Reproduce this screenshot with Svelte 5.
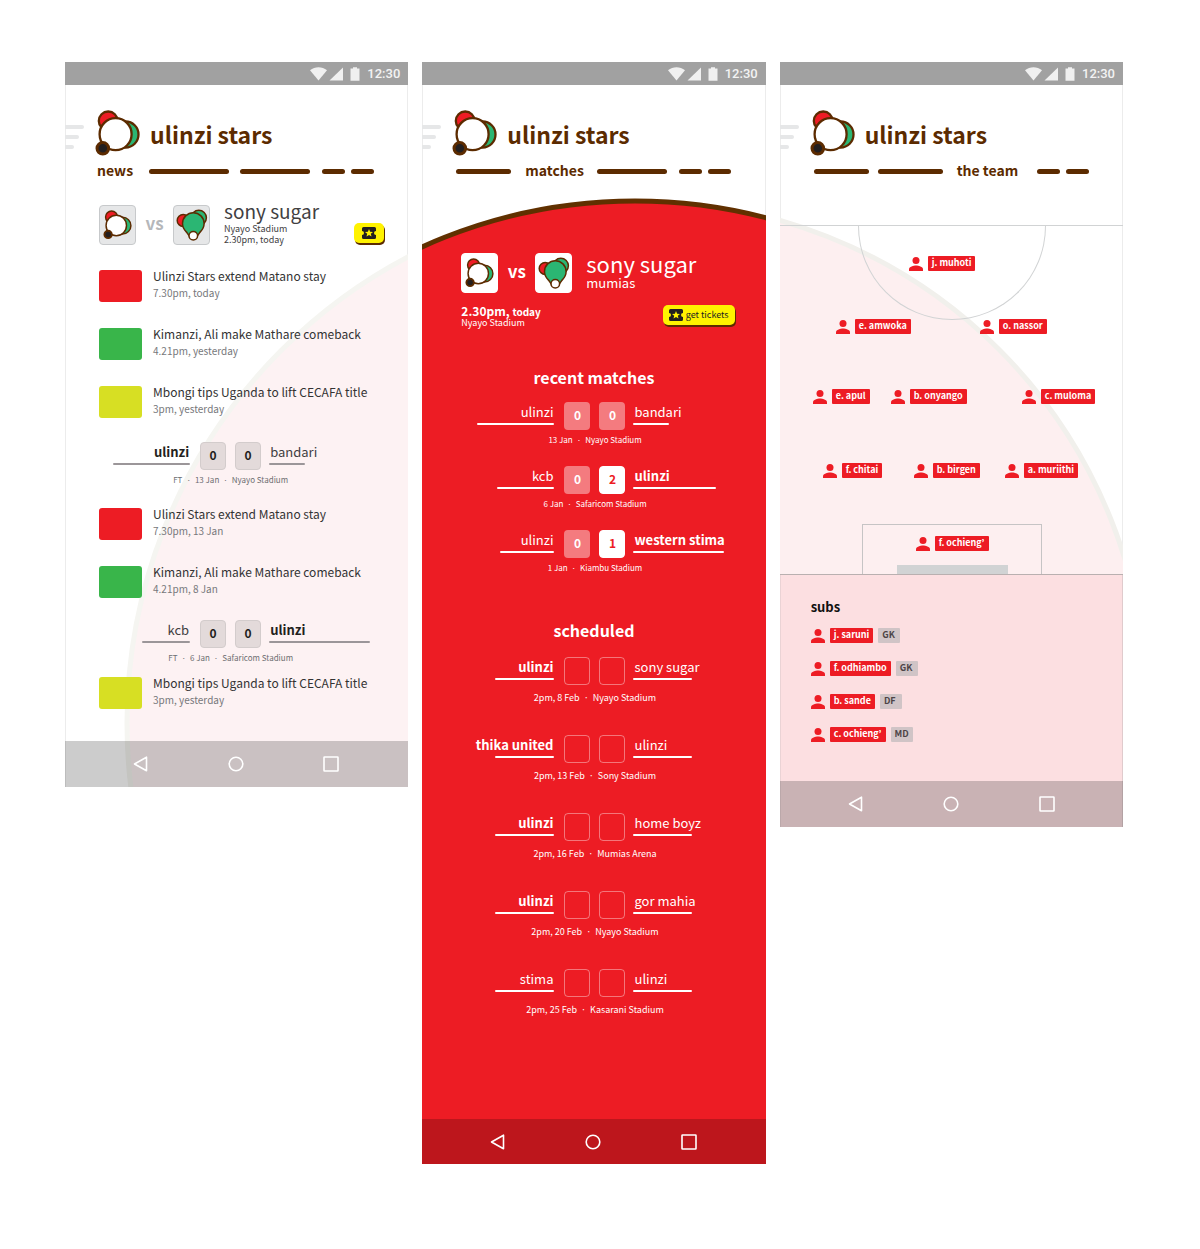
<script>
  const dashes = {
    news: ['news', 80, 70, 23, 23],
    matches: [55, 'matches', 70, 23, 23],
    team: [55, 65, 'the team', 23, 23]
  };
  const tabNames = ['news', 'matches', 'the team', 'table', 'more'];

  const feed = [
    { kind: 'story', colour: 'red', title: 'Ulinzi Stars extend Matano stay', when: '7.30pm, today', space: 'first' },
    { kind: 'story', colour: 'green', title: 'Kimanzi, Ali make Mathare comeback', when: '4.21pm, yesterday', space: 'loose' },
    { kind: 'story', colour: 'lime', title: 'Mbongi tips Uganda to lift CECAFA title', when: '3pm, yesterday', space: 'loose' },
    { kind: 'match', home: 'ulinzi', away: 'bandari', hs: '0', as: '0', hw: 77, aw: 36, bold: 'home', meta: ['FT', '13 Jan', 'Nyayo Stadium'], space: 'mid' },
    { kind: 'story', colour: 'red', title: 'Ulinzi Stars extend Matano stay', when: '7.30pm, 13 Jan', space: 'near' },
    { kind: 'story', colour: 'green', title: 'Kimanzi, Ali make Mathare comeback', when: '4.21pm, 8 Jan', space: 'loose' },
    { kind: 'match', home: 'kcb', away: 'ulinzi', hs: '0', as: '0', hw: 48, aw: 101, bold: 'away', meta: ['FT', '6 Jan', 'Safaricom Stadium'], space: 'near' },
    { kind: 'story', colour: 'lime', title: 'Mbongi tips Uganda to lift CECAFA title', when: '3pm, yesterday', space: 'tight' }
  ];

  const recent = [
    { home: 'ulinzi', away: 'bandari', hs: '0', as: '0', hw: 77, aw: 36, meta: ['13 Jan', 'Nyayo Stadium'] },
    { home: 'kcb', away: 'ulinzi', hs: '0', as: '2', hw: 57, aw: 83, bold: 'away', won: true, meta: ['6 Jan', 'Safaricom Stadium'] },
    { home: 'ulinzi', away: 'western stima', hs: '0', as: '1', hw: 54, aw: 91, bold: 'away', won: true, meta: ['1 Jan', 'Kiambu Stadium'] }
  ];

  const scheduled = [
    { home: 'ulinzi', away: 'sony sugar', bold: 'home', meta: ['2pm, 8 Feb', 'Nyayo Stadium'] },
    { home: 'thika united', away: 'ulinzi', bold: 'home', meta: ['2pm, 13 Feb', 'Sony Stadium'] },
    { home: 'ulinzi', away: 'home boyz', bold: 'home', meta: ['2pm, 16 Feb', 'Mumias Arena'] },
    { home: 'ulinzi', away: 'gor mahia', bold: 'home', meta: ['2pm, 20 Feb', 'Nyayo Stadium'] },
    { home: 'stima', away: 'ulinzi', meta: ['2pm, 25 Feb', 'Kasarani Stadium'] }
  ].map((m) => ({ ...m, hs: '', as: '', hw: 59, aw: 59, open: true }));

  const lineup = [
    { name: 'j. muhoti', x: 129, y: 30 },
    { name: 'e. amwoka', x: 56, y: 93 },
    { name: 'o. nassor', x: 200, y: 93 },
    { name: 'e. apul', x: 33, y: 163 },
    { name: 'b. onyango', x: 111, y: 163 },
    { name: 'c. muloma', x: 242, y: 163 },
    { name: 'f. chitai', x: 43, y: 237 },
    { name: 'b. birgen', x: 134, y: 237 },
    { name: 'a. muriithi', x: 225, y: 237 },
    { name: 'f. ochieng’', x: 136, y: 310 }
  ];

  const subs = [
    { name: 'j. saruni', role: 'GK' },
    { name: 'f. odhiambo', role: 'GK' },
    { name: 'b. sande', role: 'DF' },
    { name: 'c. ochieng’', role: 'MD' }
  ];
</script>

{#snippet crest()}
  <circle cx="13.2" cy="10.9" r="9.4" fill="#ed1c24" />
  <circle cx="30.5" cy="24.5" r="13" fill="#2bb673" />
  <circle cx="20.6" cy="24.2" r="16" fill="#fff" />
  <circle class="ball" cx="7.8" cy="38.3" r="5.8" fill="#231f20" />
{/snippet}

{#snippet ulinziBadge()}
  <span class="badge">
    <svg viewBox="0 0 45 47" width="29" height="30" class="crest" role="img" aria-label="Ulinzi Stars">{@render crest()}</svg>
  </span>
{/snippet}

{#snippet sonyBadge()}
  <span class="badge">
    <svg viewBox="0 0 32 32" width="32" height="32" class="sony" role="img" aria-label="Sony Sugar">
      <circle cx="7.2" cy="11.4" r="6" fill="#ed1c24" />
      <circle cx="22.8" cy="8.8" r="7.6" fill="#2bb673" />
      <path d="M17.3 3.7a10.8 10.8 0 0 1 10.8 10.8c0 4-1.800 6.400-4 8.600l-2.800 4h-8l-2.800-4c-2.200-2.200-4-4.600-4-8.600a10.800 10.800 0 0 1 10.800-10.800z" fill="#2bb673" />
      <circle cx="17.300" cy="26.800" r="4.300" fill="#fff" />
    </svg>
  </span>
{/snippet}

{#snippet ticket()}
  <svg viewBox="0 0 14 12" width="14" height="12" class="ticket" aria-hidden="true">
    <path d="M0 1.500A1.500 1.500 0 0 1 1.500 0h11A1.500 1.500 0 0 1 14 1.500V4a2 2 0 0 0 0 4v2.500a1.500 1.500 0 0 1-1.500 1.500h-11A1.500 1.500 0 0 1 0 10.500V8a2 2 0 0 0 0-4z" fill="#231f20" />
    <path d="M7 2l1.100 2.700 2.900.2-2.200 1.900.7 2.800L7 8.100 4.500 9.600l.7-2.800L3 4.900l2.900-.2z" fill="#fff200" />
  </svg>
{/snippet}

{#snippet person()}
  <svg viewBox="0 0 14 14" width="14" height="14" class="person" aria-hidden="true">
    <circle cx="7" cy="3.600" r="3.500" />
    <path d="M0 14v-1.800C0 9.800 4.600 8.600 7 8.600s7 1.200 7 3.600V14z" />
  </svg>
{/snippet}

{#snippet top(active)}
  <div class="status">
    <svg viewBox="0 0 52 14" width="52" height="14" aria-hidden="true">
      <path d="M0 3.200C5-.8 12-.8 17 3.200L8.500 13.500z" />
      <path d="M19.500 13.500 33 .5v13z" />
      <path d="M40.500 1.500h2.500V.3h4v1.200h2.500v12.300h-9z" />
    </svg>
    <time>12:30</time>
  </div>
  <header>
    <button class="menu" aria-label="Menu"><i></i><i></i><i></i></button>
    <svg viewBox="0 0 45 47" width="45" height="47" class="crest" aria-hidden="true">{@render crest()}</svg>
    <h1>ulinzi stars</h1>
  </header>
  <nav class="tabs {active}">
    {#each dashes[active] as tab, i}
      {#if typeof tab === 'string'}
        <a href="#{active}" aria-current="page">{tab}</a>
      {:else}
        <a href="#tab{i}" class="dash" aria-label={tabNames[i]} style:width="{tab}px"></a>
      {/if}
    {/each}
  </nav>
{/snippet}

{#snippet match(m)}
  <div class="match" class:open={m.open}>
    <div class="side home" class:strong={m.bold === 'home'}>
      <span>{m.home}</span>
      <i style:width="{m.hw}px"></i>
    </div>
    <b class="score">{m.hs}</b>
    <b class="score" class:won={m.won}>{m.as}</b>
    <div class="side away" class:strong={m.bold === 'away'}>
      <span>{m.away}</span>
      <i style:width="{m.aw}px"></i>
    </div>
    <p class="meta">
      {#each m.meta as part, i}{#if i > 0}<span>·</span>{/if}{part}{/each}
    </p>
  </div>
{/snippet}

{#snippet system()}
  <div class="system">
    <button aria-label="Back"><svg viewBox="0 0 18 18" width="18" height="18"><path d="M14.500 2.200v13.600L2.500 9z" /></svg></button>
    <button aria-label="Home"><svg viewBox="0 0 18 18" width="18" height="18"><circle cx="9" cy="9" r="6.800" /></svg></button>
    <button aria-label="Overview"><svg viewBox="0 0 18 18" width="18" height="18"><rect x="2" y="2" width="14" height="14" rx=".5" /></svg></button>
  </div>
{/snippet}

<main>
  <section class="phone news">
    <svg class="backdrop" aria-hidden="true"><circle cx="589" cy="661" r="527" fill="#fdf2f3" stroke="#f5f5f1" stroke-width="5" /></svg>
    {@render top('news')}
    <div class="fixture">
      {@render ulinziBadge()}
      <span class="vs">vs</span>
      {@render sonyBadge()}
      <div class="about">
        <h2>sony sugar</h2>
        <p>Nyayo Stadium</p>
        <p>2.30pm, today</p>
      </div>
      <button class="buy" aria-label="Get tickets">{@render ticket()}</button>
    </div>
    <ul class="feed">
      {#each feed as item}
        <li class={item.space}>
          {#if item.kind === 'story'}
            <article>
              <span class="thumb {item.colour}"></span>
              <div>
                <h3>{item.title}</h3>
                <p>{item.when}</p>
              </div>
            </article>
          {:else}
            {@render match(item)}
          {/if}
        </li>
      {/each}
    </ul>
    {@render system()}
  </section>

  <section class="phone matches">
    <svg class="backdrop" aria-hidden="true"><circle cx="213" cy="656" r="517" fill="#ed1c24" stroke="#603000" stroke-width="5" /></svg>
    {@render top('matches')}
    <div class="fixture">
      {@render ulinziBadge()}
      <span class="vs">vs</span>
      {@render sonyBadge()}
      <div class="about">
        <h2>sony sugar</h2>
        <p>mumias</p>
      </div>
    </div>
    <div class="kickoff">
      <div>
        <p class="when">2.30pm, <small>today</small></p>
        <p class="where">Nyayo Stadium</p>
      </div>
      <button class="buy">{@render ticket()}get tickets</button>
    </div>
    <h2 class="heading">recent matches</h2>
    <div class="results">
      {#each recent as m}{@render match(m)}{/each}
    </div>
    <h2 class="heading">scheduled</h2>
    <div class="results upcoming">
      {#each scheduled as m}{@render match(m)}{/each}
    </div>
    {@render system()}
  </section>

  <section class="phone team">
    <svg class="backdrop" aria-hidden="true"><circle cx="-139" cy="645" r="506" fill="#fdeff0" stroke="#f1f0ec" stroke-width="5" /></svg>
    {@render top('team')}
    <div class="pitch">
      <div class="centre"></div>
      <div class="area"><i></i></div>
      {#each lineup as p}
        <div class="player spot" style:left="{p.x}px" style:top="{p.y}px">
          {@render person()}
          <b>{p.name}</b>
        </div>
      {/each}
    </div>
    <div class="bench">
      <h2>subs</h2>
      <ul>
        {#each subs as p}
          <li class="player">{@render person()}<b>{p.name}</b><em>{p.role}</em></li>
        {/each}
      </ul>
      {@render system()}
    </div>
  </section>
</main>

<style>
  :global(body) {
    margin: 0;
    background: #fff;
  }
  main {
    display: grid;
    grid-template-columns: repeat(3, 1fr);
    align-items: start;
    gap: 14px;
    padding: 62px 77px 85px 65px;
    font-family: 'Noto Sans CJK JP', 'Noto Sans', sans-serif;
    color: #414042;
  }
  h1, h2, h3, p, ul {
    margin: 0;
    padding: 0;
    font-weight: 400;
  }
  ul {
    list-style: none;
  }
  button {
    border: 0;
    padding: 0;
    background: none;
    font: inherit;
    cursor: pointer;
  }
  svg {
    display: block;
    flex: none;
  }
  .phone {
    position: relative;
    isolation: isolate;
    overflow: hidden;
    box-shadow: inset 1px 0 #ececec, inset -1px 0 #ececec;
  }
  .backdrop {
    position: absolute;
    inset: 0;
    z-index: -1;
    width: 100%;
    height: 100%;
  }
  .status {
    display: flex;
    align-items: center;
    justify-content: flex-end;
    gap: 5px;
    height: 23px;
    padding-right: 8px;
    background: #a1a1a1;
    color: #f3f3f3;
    font: 500 13px/23px Roboto, sans-serif;
  }
  .status svg {
    fill: #f0f0f0;
  }
  header {
    display: flex;
    height: 47px;
    padding-top: 25px;
  }
  .menu {
    display: flex;
    flex-direction: column;
    gap: 6px;
    width: 30px;
    padding-top: 15px;
  }
  .menu i {
    width: 19px;
    height: 4px;
    border-radius: 0 2px 2px 0;
    background: #e6e7e8;
  }
  .menu i:nth-child(2) {
    width: 14px;
  }
  .menu i:nth-child(3) {
    width: 9px;
  }
  .crest {
    stroke: #5c2b00;
    stroke-width: 2.3;
  }
  .ball {
    stroke-width: 3;
  }
  h1 {
    margin-left: 10px;
    color: #5c2b00;
    font-size: 23px;
    font-weight: 700;
    line-height: 48px;
  }
  .tabs {
    display: grid;
    align-items: center;
    height: 24px;
    margin-top: 2px;
    padding-left: 34px;
    grid-template-columns: 69px 72px 82px 29px 23px;
  }
  .tabs.news {
    padding-left: 32px;
    grid-template-columns: 52px 91px 82px 29px 23px;
  }
  .tabs.team {
    grid-template-columns: 64px 79px 80px 29px 23px;
  }
  .tabs a {
    padding-bottom: 2px;
    color: #5c2b00;
    font-size: 14px;
    font-weight: 700;
    line-height: 22px;
    text-decoration: none;
    white-space: nowrap;
  }
  .tabs .dash {
    height: 5px;
    padding: 0;
    border-radius: 3px;
    background: #5c2b00;
  }
  .fixture {
    display: flex;
    align-items: center;
    padding: 21px 24px 0 34px;
  }
  .badge {
    display: flex;
    align-items: center;
    justify-content: center;
    box-sizing: border-box;
    width: 37px;
    height: 40px;
    border: 1px solid #c7c9cb;
    border-radius: 4px;
    background: #e6e7e8;
  }
  .sony {
    stroke: #5c2b00;
    stroke-width: 1.5;
  }
  .vs {
    width: 37px;
    padding-bottom: 4px;
    color: #b5b7ba;
    font-size: 17px;
    font-weight: 700;
    line-height: 20px;
    text-align: center;
  }
  .about {
    flex: 1;
    margin-left: 14px;
    padding-bottom: 1px;
    font-size: 9px;
    line-height: 11px;
  }
  .about h2 {
    margin-bottom: 5px;
    font-size: 19px;
    line-height: 14px;
  }
  .buy {
    display: flex;
    align-items: center;
    justify-content: center;
    gap: 3px;
    width: 30px;
    height: 20px;
    border-radius: 5px;
    background: #fff200;
    box-shadow: 1px 2px #5c2b00;
    color: #231f20;
    font-size: 9px;
    line-height: 18px;
  }
  .news .buy {
    align-self: flex-end;
    margin-bottom: 3px;
  }
  .feed {
    padding: 24px 0 32px;
  }
  .loose {
    margin-top: 26px;
  }
  .mid {
    margin-top: 24px;
  }
  .near {
    margin-top: 22px;
  }
  .tight {
    margin-top: 13px;
  }
  article {
    display: flex;
    gap: 11px;
    padding-left: 34px;
  }
  .thumb {
    width: 43px;
    height: 32px;
    border-radius: 3px;
  }
  .red {
    background: #ed1c24;
  }
  .green {
    background: #39b54a;
  }
  .lime {
    background: #d7df23;
  }
  h3 {
    color: #333;
    font-size: 12px;
    line-height: 12px;
  }
  article p {
    margin-top: 3px;
    color: #77787b;
    font-size: 10px;
    line-height: 16px;
  }
  .match {
    display: grid;
    grid-template-columns: 1fr 26px 26px 1fr;
    column-gap: 9px;
    padding-left: 2px;
  }
  .news .match {
    padding: 0 12px 0 0;
  }
  .side {
    display: flex;
    flex-direction: column;
    gap: 2px;
    white-space: nowrap;
    font-size: 13px;
    line-height: 19px;
  }
  .home {
    align-items: flex-end;
    margin-right: 1px;
  }
  .away {
    margin-left: -1px;
  }
  .home span {
    margin-right: 1px;
  }
  .away span {
    margin-left: 1px;
  }
  .strong {
    font-weight: 700;
  }
  .news .strong {
    color: #231f20;
  }
  .side i {
    height: 2px;
    border-radius: 1px;
    background: #9b9699;
  }
  .score {
    box-sizing: border-box;
    height: 28px;
    border: 1px solid #d3cccc;
    border-radius: 4px;
    background: #e3dada;
    color: #231f20;
    font-size: 12px;
    line-height: 24px;
    text-align: center;
  }
  .meta {
    grid-column: 1 / -1;
    margin-top: 4px;
    color: #6d6e71;
    font-size: 8px;
    line-height: 12px;
    text-align: center;
  }
  .meta span {
    margin: 0 4px;
  }
  .system {
    display: flex;
    align-items: center;
    justify-content: space-between;
    height: 46px;
    padding: 0 68px 0 67px;
    background: rgba(0, 0, 0, .2);
  }
  .team .system {
    padding: 0 67px;
  }
  .system svg {
    fill: none;
    stroke: #fff;
    stroke-width: 1.6;
    stroke-linejoin: round;
  }
  .matches {
    color: #fff;
  }
  .matches .fixture {
    padding: 70px 22px 0 39px;
  }
  .matches .badge {
    border-color: #fff;
    background: #fff;
  }
  .matches .vs {
    color: #fff;
  }
  .matches .about {
    padding-bottom: 0;
    font-size: 13px;
    line-height: 20px;
  }
  .matches .about h2 {
    margin-bottom: 0;
    font-size: 22px;
    line-height: 20px;
  }
  .kickoff {
    display: flex;
    justify-content: space-between;
    padding: 12px 31px 0 39px;
  }
  .when {
    font-size: 12px;
    font-weight: 700;
    line-height: 12px;
  }
  .when small {
    font-size: 10px;
  }
  .where {
    font-size: 9px;
    line-height: 10px;
  }
  .kickoff .buy {
    width: 72px;
  }
  .heading {
    padding-top: 37px;
    font-size: 16px;
    font-weight: 700;
    line-height: 24px;
    text-align: center;
  }
  .results {
    display: flex;
    flex-direction: column;
    gap: 20px;
    padding: 13px 0 7px;
  }
  .matches .score {
    border-color: transparent;
    background: rgba(255, 255, 255, .42);
    color: #fff;
  }
  .matches .score.won {
    border-color: #fff;
    background: #fff;
    color: #ed1c24;
  }
  .matches .open .score {
    border-color: rgba(255, 255, 255, .4);
    background: none;
  }
  .matches .side i {
    background: #fff;
  }
  .matches .meta {
    color: #fff;
  }
  .upcoming {
    gap: 31px;
    padding: 15px 0 103px;
  }
  .open .meta {
    margin-top: 7px;
    font-size: 9px;
  }
  .matches .system {
    height: 45px;
  }
  .pitch {
    position: relative;
    box-sizing: border-box;
    height: 349px;
    margin-top: 42px;
    padding-left: 2px;
    border-top: 1px solid #d1d3d4;
    overflow: hidden;
  }
  .centre {
    box-sizing: border-box;
    width: 188px;
    height: 94px;
    margin: 0 auto;
    border: 1px solid #d1d3d4;
    border-top: 0;
    border-radius: 0 0 94px 94px;
  }
  .area {
    position: absolute;
    bottom: 0;
    left: 50%;
    display: flex;
    align-items: flex-end;
    justify-content: center;
    box-sizing: border-box;
    width: 180px;
    height: 50px;
    margin-left: -89px;
    border: 1px solid #c6c4c5;
    border-bottom: 0;
  }
  .area i {
    width: 111px;
    height: 9px;
    background: #d1d3d4;
  }
  .player {
    display: flex;
    align-items: center;
    gap: 5px;
    height: 15px;
  }
  .spot {
    position: absolute;
  }
  .person {
    fill: #ed1c24;
  }
  .player b,
  .player em {
    padding: 0 4px 2px;
    border-radius: 1px;
    background: #ed1c24;
    color: #fff;
    font-size: 9px;
    font-style: normal;
    font-weight: 700;
    line-height: 13px;
    white-space: nowrap;
  }
  .player em {
    min-width: 14px;
    background: #d0c4c6;
    color: #4d4446;
  }
  .bench {
    border-top: 1px solid #b9b0b0;
    background: #fcdfe1;
    box-shadow: inset 1px 0 #ead3d5, inset -1px 0 #e0cbcd;
  }
  .bench h2 {
    padding: 20px 31px 0;
    color: #111;
    font-size: 13px;
    font-weight: 700;
    line-height: 24px;
  }
  .bench ul {
    display: flex;
    flex-direction: column;
    gap: 18px;
    padding: 9px 31px 39px;
  }
</style>
